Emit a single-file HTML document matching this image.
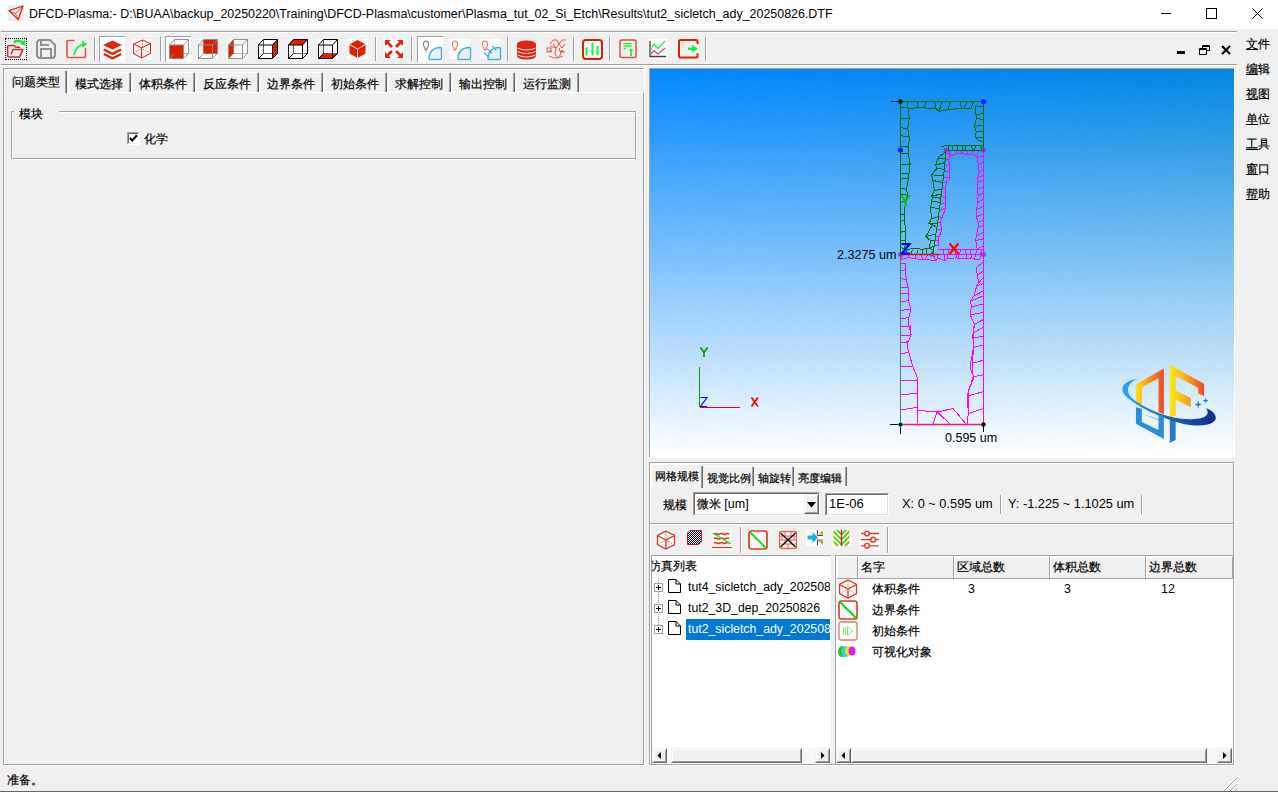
<!DOCTYPE html>
<html><head><meta charset="utf-8">
<style>
*{box-sizing:border-box}
html,body{margin:0;padding:0}
body{width:1278px;height:792px;overflow:hidden;position:relative;background:#f0f0f0;font-family:"Liberation Sans",sans-serif;font-size:12px;color:#000}
.a{position:absolute}
.t{position:absolute;white-space:nowrap;line-height:14px;-webkit-text-stroke:0.2px currentColor}
.l{-webkit-text-stroke:0}
.hl{position:absolute;height:1px}
.vl{position:absolute;width:1px}
.g{background:#a0a0a0}
.w{background:#fff}
svg{position:absolute;overflow:visible}
</style></head><body>

<!-- title bar -->
<div class="a" style="left:0;top:0;width:1278px;height:29px;background:#fff"></div>
<svg style="left:8px;top:5px" width="16" height="16" viewBox="0 0 16 16">
  <rect x="0" y="0" width="16" height="16" fill="#e9eef6"/>
  <path d="M1,5.6 L15,1 L10.2,14.6 Z" fill="none" stroke="#e8200e" stroke-width="1.3" stroke-linejoin="round"/>
  <path d="M1.5,6 L7.4,8.7 L10,14 M7.4,8.7 L14.5,1.8" fill="none" stroke="#e8200e" stroke-width="0.9" opacity="0.85"/>
</svg>
<div class="t l" id="title" style="left:29px;top:7px;font-size:12.45px">DFCD-Plasma:- D:\BUAA\backup_20250220\Training\DFCD-Plasma\customer\Plasma_tut_02_Si_Etch\Results\tut2_sicletch_ady_20250826.DTF</div>
<div class="a" style="left:1161px;top:13px;width:10px;height:1px;background:#000"></div>
<div class="a" style="left:1206px;top:8px;width:11px;height:11px;border:1px solid #000"></div>
<svg style="left:1252px;top:8px" width="11" height="11" viewBox="0 0 11 11"><path d="M0.5 0.5 L10.5 10.5 M10.5 0.5 L0.5 10.5" stroke="#000" stroke-width="1"/></svg>

<!-- toolbar lines -->
<div class="hl g" style="left:1px;top:31px;width:1236px"></div>
<div class="hl w" style="left:1px;top:32px;width:1236px"></div>
<div class="hl g" style="left:1px;top:64px;width:1236px"></div>
<div class="hl w" style="left:1px;top:65px;width:1236px"></div>

<div class="a" style="left:5px;top:38px;width:22px;height:22px;background:#ecf0f8;border:1px dotted #000"></div>
<svg style="left:5px;top:38px" width="22" height="22" viewBox="0 0 22 22"><path d="M14.5,9.2 H10.8 L9.2,7.6 H4 Q2.6,7.6 2.6,9 V17.4 Q2.6,18.9 4,18.9 H14.6 L17.6,12.6 Q17.9,11.5 16.8,11.5 H8.2 L6.2,15.6" fill="none" stroke="#e02412" stroke-width="1.5" stroke-linejoin="round" stroke-linecap="round"/><path d="M8.8,4.6 Q13,0.8 17.5,4.4" fill="none" stroke="#10e830" stroke-width="2.2"/><path d="M15,5.8 L20.2,1.8 L20.2,8 Z" fill="#10e830"/></svg>
<svg style="left:36px;top:39px" width="20" height="20" viewBox="0 0 20 20"><path d="M3,1 H14 L19,6 V17 L17,19 H3 L1,17 V3 Z" fill="none" stroke="#909090" stroke-width="2"/><path d="M5,1 V6 H13" fill="none" stroke="#909090" stroke-width="2"/><path d="M5,19 V10 H15 V19" fill="none" stroke="#909090" stroke-width="2"/></svg>
<svg style="left:66px;top:39px" width="21" height="20" viewBox="0 0 21 20"><path d="M8.5,1.5 H2 Q1,1.5 1,2.5 V17 Q1,18.5 2.5,18.5 H18 Q19.5,18.5 19.5,17 V9" fill="none" stroke="#e05040" stroke-width="1.6"/><path d="M8,16 Q9.5,7 18,5" fill="none" stroke="#10f040" stroke-width="1.7"/><path d="M16,1.5 L21,5 L16.5,9 Z" fill="#10f040"/></svg>
<div class="vl g" style="left:94px;top:37px;height:24px"></div><div class="vl w" style="left:95px;top:37px;height:24px"></div>
<div class="a" style="left:99px;top:36px;width:26px;height:26px;background:#fff;border-left:1px solid #a0a0a0;border-top:1px solid #a0a0a0"></div>
<svg style="left:103px;top:40px" width="20" height="20" viewBox="0 0 20 20"><path d="M9.5,0.5 L19,5 L9.5,9.5 L0,5 Z" fill="#e02412"/><path d="M0.8,9.5 L9.5,13.8 L18.2,9.5 M0.8,14 L9.5,18.3 L18.2,14" fill="none" stroke="#e02412" stroke-width="2.4" stroke-linejoin="round"/></svg>
<div class="a" style="left:132px;top:39px;width:20px;height:20px;background:#fff"></div>
<svg style="left:132px;top:39px" width="20" height="20" viewBox="0 0 20 20"><path d="M10.5,1 L18.5,4.5 V14.5 L9.5,19 L1.5,14.5 V5 Z M1.5,5 L9.5,9 L18.5,4.5 M9.5,9 V19" fill="none" stroke="#e02412" stroke-width="1.1"/><path d="M10.5,2 V8.5 M4,12.5 L9.5,10 M11,10 L16,13" stroke="#e02412" stroke-width="0.8" stroke-dasharray="1.2 1.2"/></svg>
<div class="vl g" style="left:160px;top:37px;height:24px"></div><div class="vl w" style="left:161px;top:37px;height:24px"></div>
<div class="a" style="left:165px;top:36px;width:26px;height:26px;background:#fff;border-left:1px solid #a0a0a0;border-top:1px solid #a0a0a0"></div>
<svg style="left:169px;top:39px" width="20" height="20" viewBox="0 0 20 20"><path d="M5.5,0.5 H19.5 V14.5 H5.5 Z" fill="none" stroke="#b0b0b0" stroke-width="1"/><rect x="0.5" y="6" width="14" height="13.5" fill="#dd1f00"/><path d="M0.5,6 L5.5,0.5 M14.5,6 L19.5,0.5 M14.5,19.5 L19.5,14.5 M0.5,19.5 L5.5,14.5" stroke="#909090" stroke-width="1"/><rect x="0.5" y="6" width="14" height="13.5" fill="none" stroke="#909090" stroke-width="1"/><path d="M5.5,0.5 H19.5 V14.5" fill="none" stroke="#909090" stroke-width="1"/></svg>
<div class="a" style="left:198px;top:39px;width:20px;height:20px;background:#fff"></div>
<svg style="left:198px;top:39px" width="20" height="20" viewBox="0 0 20 20"><path d="M5.5,0.5 H19.5 V14.5 H5.5 Z" fill="none" stroke="#b0b0b0" stroke-width="1"/><path d="M5.5,0.5 H19.5 V14.5 H5.5 Z" fill="#dd1f00"/><path d="M0.5,6 L5.5,0.5 M14.5,6 L19.5,0.5 M14.5,19.5 L19.5,14.5 M0.5,19.5 L5.5,14.5" stroke="#909090" stroke-width="1"/><rect x="0.5" y="6" width="14" height="13.5" fill="none" stroke="#909090" stroke-width="1"/><path d="M5.5,0.5 H19.5 V14.5" fill="none" stroke="#909090" stroke-width="1"/></svg>
<div class="a" style="left:228px;top:39px;width:20px;height:20px;background:#fff"></div>
<svg style="left:228px;top:39px" width="20" height="20" viewBox="0 0 20 20"><path d="M5.5,0.5 H19.5 V14.5 H5.5 Z" fill="none" stroke="#b0b0b0" stroke-width="1"/><path d="M0.5,6 L5.5,0.5 V14.5 L0.5,19.5 Z" fill="#dd1f00"/><path d="M0.5,6 L5.5,0.5 M14.5,6 L19.5,0.5 M14.5,19.5 L19.5,14.5 M0.5,19.5 L5.5,14.5" stroke="#909090" stroke-width="1"/><rect x="0.5" y="6" width="14" height="13.5" fill="none" stroke="#909090" stroke-width="1"/><path d="M5.5,0.5 H19.5 V14.5" fill="none" stroke="#909090" stroke-width="1"/></svg>
<div class="a" style="left:258px;top:39px;width:20px;height:20px;background:#fff"></div>
<svg style="left:258px;top:39px" width="20" height="20" viewBox="0 0 20 20"><path d="M5.5,0.5 H19.5 V14.5 H5.5 Z" fill="none" stroke="#606060" stroke-width="1"/><path d="M14.5,6 L19.5,0.5 V14.5 L14.5,19.5 Z" fill="#dd1f00"/><path d="M0.5,6 L5.5,0.5 M14.5,6 L19.5,0.5 M14.5,19.5 L19.5,14.5 M0.5,19.5 L5.5,14.5" stroke="#000" stroke-width="1"/><rect x="0.5" y="6" width="14" height="13.5" fill="none" stroke="#000" stroke-width="1"/><path d="M5.5,0.5 H19.5 V14.5" fill="none" stroke="#000" stroke-width="1"/></svg>
<div class="a" style="left:288px;top:39px;width:20px;height:20px;background:#fff"></div>
<svg style="left:288px;top:39px" width="20" height="20" viewBox="0 0 20 20"><path d="M5.5,0.5 H19.5 V14.5 H5.5 Z" fill="none" stroke="#606060" stroke-width="1"/><path d="M0.5,6 L5.5,0.5 H19.5 L14.5,6 Z" fill="#dd1f00"/><path d="M0.5,6 L5.5,0.5 M14.5,6 L19.5,0.5 M14.5,19.5 L19.5,14.5 M0.5,19.5 L5.5,14.5" stroke="#000" stroke-width="1"/><rect x="0.5" y="6" width="14" height="13.5" fill="none" stroke="#000" stroke-width="1"/><path d="M5.5,0.5 H19.5 V14.5" fill="none" stroke="#000" stroke-width="1"/></svg>
<div class="a" style="left:318px;top:39px;width:20px;height:20px;background:#fff"></div>
<svg style="left:318px;top:39px" width="20" height="20" viewBox="0 0 20 20"><path d="M5.5,0.5 H19.5 V14.5 H5.5 Z" fill="none" stroke="#606060" stroke-width="1"/><path d="M0.5,19.5 L5.5,14.5 H19.5 L14.5,19.5 Z" fill="#dd1f00"/><path d="M0.5,6 L5.5,0.5 M14.5,6 L19.5,0.5 M14.5,19.5 L19.5,14.5 M0.5,19.5 L5.5,14.5" stroke="#000" stroke-width="1"/><rect x="0.5" y="6" width="14" height="13.5" fill="none" stroke="#000" stroke-width="1"/><path d="M5.5,0.5 H19.5 V14.5" fill="none" stroke="#000" stroke-width="1"/></svg>
<div class="a" style="left:348px;top:39px;width:20px;height:20px;background:#fff"></div>
<svg style="left:348px;top:39px" width="20" height="20" viewBox="0 0 20 20"><path d="M9.5,1 L17.5,5.5 V14.5 L9.5,19 L1.5,14.5 V5.5 Z" fill="#dd1f00"/><path d="M1.5,5.5 L9.5,10 L17.5,5.5 M9.5,10 V19" fill="none" stroke="#fff" stroke-width="0.9"/></svg>
<div class="vl g" style="left:375px;top:37px;height:24px"></div><div class="vl w" style="left:376px;top:37px;height:24px"></div>
<div class="a" style="left:384px;top:39px;width:20px;height:20px;background:#fff"></div>
<svg style="left:384px;top:39px" width="20" height="20" viewBox="0 0 20 20"><path d="M1,1 H7 L5,3 L9,7 L7,9 L3,5 L1,7 Z M19,1 V7 L17,5 L13,9 L11,7 L15,3 L13,1 Z M1,19 V13 L3,15 L7,11 L9,13 L5,17 L7,19 Z M19,19 H13 L15,17 L11,13 L13,11 L17,15 L19,13 Z" fill="#e02412"/></svg>
<div class="vl g" style="left:411px;top:37px;height:24px"></div><div class="vl w" style="left:412px;top:37px;height:24px"></div>
<div class="a" style="left:417px;top:36px;width:26px;height:26px;background:#fff;border-left:1px solid #a0a0a0;border-top:1px solid #a0a0a0"></div>
<svg style="left:422px;top:40px" width="20" height="20" viewBox="0 0 20 20"><path d="M3,8 C0.5,6 1,1 4,1 C7,1 7.5,6 5,8 V9.5 H3 Z" fill="none" stroke="#808080" stroke-width="1.1"/><path d="M3,10 H5" stroke="#808080" stroke-width="1.2"/><path d="M7,19 Q7,8 18.5,7.5 Q19.5,7.5 19.5,8.5 V18 Q19.5,19.5 18,19.5 H8 Q7,19.5 7,19 Z" fill="#e8f4fc" stroke="#48ace0" stroke-width="1.4"/></svg>
<div class="a" style="left:450px;top:39px;width:20px;height:20px;background:#fff"></div>
<svg style="left:451px;top:40px" width="20" height="20" viewBox="0 0 20 20"><path d="M3,8 C0.5,6 1,1 4,1 C7,1 7.5,6 5,8 V9.5 H3 Z" fill="none" stroke="#f07060" stroke-width="1.1"/><path d="M3,10 H5" stroke="#f07060" stroke-width="1.2"/><path d="M7,19 Q7,8 18.5,7.5 Q19.5,7.5 19.5,8.5 V18 Q19.5,19.5 18,19.5 H8 Q7,19.5 7,19 Z" fill="#e8f4fc" stroke="#48ace0" stroke-width="1.4"/></svg>
<div class="a" style="left:480px;top:39px;width:20px;height:20px;background:#fff"></div>
<svg style="left:481px;top:40px" width="20" height="20" viewBox="0 0 20 20"><path d="M3,8 C0.5,6 1,1 4,1 C7,1 7.5,6 5,8 V9.5 H3 Z" fill="none" stroke="#f07060" stroke-width="1.1"/><path d="M3,10 H5" stroke="#f07060" stroke-width="1.2"/><path d="M7,19 Q7,8 18.5,7.5 Q19.5,7.5 19.5,8.5 V18 Q19.5,19.5 18,19.5 H8 Q7,19.5 7,19 Z" fill="#e8f4fc" stroke="#48ace0" stroke-width="1.4"/><path d="M6,8.5 L11,13.5 M11,6 L15.5,10.5 M3,12.5 L7.5,17" stroke="#48ace0" stroke-width="1.1"/></svg>
<div class="vl g" style="left:507px;top:37px;height:24px"></div><div class="vl w" style="left:508px;top:37px;height:24px"></div>
<svg style="left:516px;top:40px" width="21" height="20" viewBox="0 0 21 20"><ellipse cx="10.5" cy="4" rx="9.5" ry="3.5" fill="#e02412"/><path d="M1,4 V15.5 Q1,19.5 10.5,19.5 Q20,19.5 20,15.5 V4 Z" fill="#e02412"/><path d="M1.5,8 Q10.5,12 19.5,8 M1.5,11.5 Q10.5,15.5 19.5,11.5 M1.5,15 Q10.5,19 19.5,15" fill="none" stroke="#fff" stroke-width="0.9"/></svg>
<svg style="left:546px;top:39px" width="21" height="21" viewBox="0 0 21 21"><g fill="none" stroke="#e85a48" stroke-width="1"><path d="M4,5 L7,1 H11 L13,5 L16,1 H20 M7,5 L10,9 L13,5 L16,9 L19,5 M4,7 L10,9 M10,9 L9,15 L12,19 L15,15 L13,9 M3,17 Q10,21 17,17 M2,12 H6 M15,13 H19"/><rect x="1" y="9" width="4" height="4"/><path d="M16,11 L18,13 L14,13 Z"/></g></svg>
<div class="vl g" style="left:573px;top:37px;height:24px"></div><div class="vl w" style="left:574px;top:37px;height:24px"></div>
<svg style="left:582px;top:39px" width="21" height="21" viewBox="0 0 21 21"><rect x="1" y="1" width="19" height="19" rx="3" fill="#fff" stroke="#dd1f00" stroke-width="2"/><path d="M4.5,8.5 V16.5 M10.5,3.5 V16.5 M15.5,7 V16.5" stroke="#20f040" stroke-width="2"/></svg>
<div class="vl g" style="left:609px;top:37px;height:24px"></div><div class="vl w" style="left:610px;top:37px;height:24px"></div>
<svg style="left:619px;top:39px" width="18" height="20" viewBox="0 0 18 20"><rect x="1" y="1" width="16" height="17.5" rx="2" fill="none" stroke="#e05040" stroke-width="1.5"/><path d="M4.5,4.5 H12.5 M4.5,7 H12.5 M4.5,9.5 H7" stroke="#20f040" stroke-width="1.4"/><path d="M12,17 V11" stroke="#20f040" stroke-width="1.8"/><path d="M9.5,12 L12,9.5 L14.5,12 Z" fill="#20f040"/></svg>
<div class="a" style="left:648px;top:39px;width:20px;height:20px;background:#fff"></div>
<svg style="left:648px;top:39px" width="20" height="20" viewBox="0 0 20 20"><path d="M2,2 V17.5 H18" fill="none" stroke="#404040" stroke-width="1.3"/><path d="M2.5,11 L6,5 L10,9.5 L17,2" fill="none" stroke="#20f040" stroke-width="1.2"/><path d="M2.5,15 L6,11.5 L10,15 L17,9" fill="none" stroke="#e04060" stroke-width="1.2"/></svg>
<svg style="left:678px;top:39px" width="21" height="20" viewBox="0 0 21 20"><path d="M19.5,5 V2.5 Q19.5,1 18,1 H2.5 Q1,1 1,2.5 V17 Q1,18.5 2.5,18.5 H18 Q19.5,18.5 19.5,17 V14.5" fill="none" stroke="#dd1f00" stroke-width="2"/><path d="M10,9.8 H16" stroke="#10f040" stroke-width="2.4"/><path d="M14,6 L20,9.8 L14,13.6 Z" fill="#10f040"/></svg>
<div class="vl g" style="left:705px;top:37px;height:24px"></div><div class="vl w" style="left:706px;top:37px;height:24px"></div>

<!-- MDI buttons -->
<div class="a" style="left:1177px;top:51px;width:8px;height:3px;background:#000"></div>
<svg style="left:1199px;top:45px" width="11" height="10" viewBox="0 0 11 10"><path d="M3.5 3 V0.5 H10.5 V5.5 H7.5 M0.5 3.5 H7.5 V9.5 H0.5 Z M0.5 4.5 H7.5" fill="none" stroke="#000" stroke-width="1"/><path d="M3.5 1.5 H10.5" stroke="#000"/></svg>
<svg style="left:1221px;top:45px" width="10" height="10" viewBox="0 0 10 10"><path d="M1 1 L9 9 M9 1 L1 9" stroke="#000" stroke-width="2.2"/></svg>

<!-- right menu -->
<div class="t" style="left:1246px;top:37px">文件</div>
<div class="t" style="left:1246px;top:62px">编辑</div>
<div class="t" style="left:1246px;top:87px">视图</div>
<div class="t" style="left:1246px;top:112px">单位</div>
<div class="t" style="left:1246px;top:137px">工具</div>
<div class="t" style="left:1246px;top:162px">窗口</div>
<div class="t" style="left:1246px;top:187px">帮助</div>

<div class="hl" style="left:1246px;top:49px;width:12px;background:#000"></div>
<div class="hl" style="left:1246px;top:74px;width:12px;background:#000"></div>
<div class="hl" style="left:1246px;top:99px;width:12px;background:#000"></div>
<div class="hl" style="left:1246px;top:124px;width:12px;background:#000"></div>
<div class="hl" style="left:1246px;top:149px;width:12px;background:#000"></div>
<div class="hl" style="left:1246px;top:174px;width:12px;background:#000"></div>
<div class="hl" style="left:1246px;top:199px;width:12px;background:#000"></div>
<div class="a" style="left:3px;top:68px;width:641px;height:697px;border:1px solid #a0a0a0;border-right:none"></div><div class="vl g" style="left:643px;top:93px;height:672px"></div>
<div class="hl w" style="left:4px;top:69px;width:640px"></div>
<div class="vl w" style="left:4px;top:69px;height:695px"></div>
<div class="vl w" style="left:644px;top:68px;height:698px"></div>
<div class="hl w" style="left:3px;top:765px;width:642px"></div>
<div class="hl w" style="left:4px;top:92px;width:639px"></div>
<div class="vl w" style="left:68px;top:73px;height:19px"></div>
<div class="hl w" style="left:69px;top:72px;width:60px"></div>
<div class="vl" style="left:130px;top:73px;height:19px;background:#696969"></div>
<div class="vl g" style="left:129px;top:73px;height:19px"></div>
<div class="t" style="left:75px;top:77px">模式选择</div>
<div class="vl w" style="left:132px;top:73px;height:19px"></div>
<div class="hl w" style="left:133px;top:72px;width:60px"></div>
<div class="vl" style="left:194px;top:73px;height:19px;background:#696969"></div>
<div class="vl g" style="left:193px;top:73px;height:19px"></div>
<div class="t" style="left:139px;top:77px">体积条件</div>
<div class="vl w" style="left:196px;top:73px;height:19px"></div>
<div class="hl w" style="left:197px;top:72px;width:60px"></div>
<div class="vl" style="left:258px;top:73px;height:19px;background:#696969"></div>
<div class="vl g" style="left:257px;top:73px;height:19px"></div>
<div class="t" style="left:203px;top:77px">反应条件</div>
<div class="vl w" style="left:260px;top:73px;height:19px"></div>
<div class="hl w" style="left:261px;top:72px;width:60px"></div>
<div class="vl" style="left:322px;top:73px;height:19px;background:#696969"></div>
<div class="vl g" style="left:321px;top:73px;height:19px"></div>
<div class="t" style="left:267px;top:77px">边界条件</div>
<div class="vl w" style="left:324px;top:73px;height:19px"></div>
<div class="hl w" style="left:325px;top:72px;width:60px"></div>
<div class="vl" style="left:386px;top:73px;height:19px;background:#696969"></div>
<div class="vl g" style="left:385px;top:73px;height:19px"></div>
<div class="t" style="left:331px;top:77px">初始条件</div>
<div class="vl w" style="left:388px;top:73px;height:19px"></div>
<div class="hl w" style="left:389px;top:72px;width:60px"></div>
<div class="vl" style="left:450px;top:73px;height:19px;background:#696969"></div>
<div class="vl g" style="left:449px;top:73px;height:19px"></div>
<div class="t" style="left:395px;top:77px">求解控制</div>
<div class="vl w" style="left:452px;top:73px;height:19px"></div>
<div class="hl w" style="left:453px;top:72px;width:60px"></div>
<div class="vl" style="left:514px;top:73px;height:19px;background:#696969"></div>
<div class="vl g" style="left:513px;top:73px;height:19px"></div>
<div class="t" style="left:459px;top:77px">输出控制</div>
<div class="vl w" style="left:516px;top:73px;height:19px"></div>
<div class="hl w" style="left:517px;top:72px;width:60px"></div>
<div class="vl" style="left:578px;top:73px;height:19px;background:#696969"></div>
<div class="vl g" style="left:577px;top:73px;height:19px"></div>
<div class="t" style="left:523px;top:77px">运行监测</div>
<div class="a" style="left:4px;top:69px;width:63px;height:25px;background:#f0f0f0"></div>
<div class="vl w" style="left:4px;top:71px;height:22px"></div>
<div class="hl w" style="left:6px;top:69px;width:59px"></div>
<div class="vl" style="left:66px;top:71px;height:22px;background:#696969"></div>
<div class="vl g" style="left:65px;top:71px;height:22px"></div>
<div class="t" style="left:12px;top:75px">问题类型</div>
<div class="a" style="left:11px;top:111px;width:625px;height:48px;border:1px solid #a0a0a0"></div>
<div class="a" style="left:12px;top:112px;width:625px;height:48px;border:1px solid #fff;border-right:none;border-bottom:none"></div>
<div class="vl w" style="left:636px;top:111px;height:49px"></div>
<div class="hl w" style="left:11px;top:159px;width:626px"></div>
<div class="a" style="left:14px;top:106px;width:45px;height:10px;background:#f0f0f0"></div>
<div class="t" style="left:19px;top:107px">模块</div>
<svg style="left:127px;top:132px" width="13" height="13" viewBox="0 0 13 13"><rect x="0" y="0" width="13" height="13" fill="#fff"/><path d="M0.5 12 V0.5 H12" stroke="#a0a0a0" fill="none"/><path d="M1.5 11 V1.5 H11" stroke="#696969" fill="none"/><path d="M3 6 L5.2 8.5 L10 3.3" stroke="#000" stroke-width="2" fill="none"/></svg>
<div class="t" style="left:144px;top:132px">化学</div>

<div class="a" style="left:649px;top:68px;width:586px;height:390px;background:#fff"></div>
<div class="vl" style="left:649px;top:68px;height:389px;background:#a0a0a0"></div>
<div class="hl" style="left:649px;top:68px;width:585px;background:#a89c90"></div>
<div class="a" style="left:650px;top:69px;width:584px;height:388px;background:linear-gradient(to bottom,#0288ff 0%,#80c3ff 50%,#ffffff 100%)"></div>
<div class="a" style="left:650px;top:69px;width:584px;height:388px;background:linear-gradient(to bottom,#0286e0 0%,#80c2f0 50%,#ffffff 100%);-webkit-mask-image:linear-gradient(to right,rgba(0,0,0,0),#000);mask-image:linear-gradient(to right,rgba(0,0,0,0),#000)"></div>
<svg style="left:0;top:0" width="1278" height="792" viewBox="0 0 1278 792">
<path d="M946,150 L944,172 L942,188 L940,205 L938,220 L935,240 L933,254 M945.7,153.0 L951.0,153.7 M945.2,158.8 L948.4,159.8 M944.6,165.7 L950.0,164.3 M944.0,171.6 L949.7,170.8 M943.3,177.6 L949.7,178.0 M942.7,182.7 L946.8,181.3 M941.8,189.4 L945.4,188.5 M941.0,196.8 L945.5,197.3 M940.1,204.2 L945.8,203.7 M939.4,209.2 L945.4,208.9 M938.4,216.6 L942.0,217.8 M937.6,222.9 L940.2,222.4 M936.7,228.9 L942.1,229.9 M935.6,235.7 L938.8,237.0 M934.9,240.5 L938.3,240.4 M934.2,245.5 L939.0,245.2 M950.9533000694422,153.70511445464544 L948.3550297819514,159.8009910709351 L949.9775403470254,164.27600711173162 L949.6922453334016,170.80874708794198 L949.6878953410082,177.95169402201626 L946.7962437339557,181.26309464377738 L945.368654938536,188.47818939380664 L945.4667268387745,197.31103392734553 L945.7797632789574,203.72216268295006 L945.4342361018968,208.94858747744436 L941.9800937914956,217.78790470051996 L940.2252727247777,222.39574435566598 L942.0689009499658,229.94485202436354 L938.8151911919891,237.04394956895183 L938.3356853567597,240.35476154513998 L939.043583239896,245.21545695137436 M950.0,150.5 L949.3,156.4 M956.9,150.5 L956.8,153.8 M961.0,150.5 L962.5,153.6 M967.2,150.5 L967.4,154.6 M973.5,150.5 L971.6,154.0 M978.9,150.5 L977.0,156.4 M949.261486581453,156.43691444357228 L956.756018870739,153.76137725934794 L962.5318830619672,153.64520939718105 L967.4487874729094,154.58160622993486 L971.6174562559127,153.97558405561867 L977.0044034711319,156.40383952060674 M983.5,150 L983.5,424 M983.5,156.0 L976.9,157.4 M983.5,162.5 L978.3,164.8 M983.5,169.0 L979.1,172.4 M983.5,175.7 L977.9,177.3 M983.5,180.5 L977.9,181.6 M983.5,187.3 L977.5,188.8 M983.5,192.7 L978.0,195.8 M983.5,199.2 L977.7,202.4 M983.5,206.2 L976.7,209.9 M983.5,213.8 L976.6,216.9 M983.5,219.6 L978.3,222.5 M983.5,225.2 L978.1,227.9 M983.5,232.2 L976.2,236.1 M983.5,238.8 L975.7,240.4 M983.5,245.9 L977.1,248.8 M976.9126621660712,157.4226235776435 L978.3119141674409,164.80449140028773 L979.1003055646056,172.4453587787214 L977.9403415248878,177.28540219890542 L977.9332788086208,181.56294787874916 L977.4536518474564,188.83895974019603 L978.0490150719955,195.83826034751945 L977.6635403142791,202.42695780502396 L976.6783697087811,209.92800424885468 L976.5608943736719,216.9337986019351 L978.2871789200223,222.4760417548427 L978.0718876326158,227.86232932838956 L976.2272241301463,236.05702328432727 L975.6861230005815,240.38369359425835 L977.0957327644428,248.839903356278 M983.5,262.0 L976.1,267.6 M983.5,271.0 L977.3,275.2 M983.5,277.3 L978.8,282.9 M983.5,283.6 L976.7,285.9 M983.5,290.8 L974.0,295.9 M983.5,295.8 L970.5,301.1 M983.5,304.1 L971.4,306.8 M983.5,312.3 L970.2,314.9 M983.5,319.4 L974.5,324.3 M983.5,327.2 L973.3,333.0 M983.5,336.1 L972.0,338.4 M976.0881753956153,267.5999349471993 L977.3455749683558,275.15273219651283 L978.778917313205,282.89052252526864 L976.704505962955,285.94538355819634 L973.9879898101294,295.8984953015455 L970.5401529008104,301.08144547997506 L971.3753960448736,306.7958815104354 L970.2433777674967,314.8755019238952 L974.527599345261,324.2771713305848 L973.3109692793521,332.96125585700133 L972.0210419537127,338.4088086736134 M983.5,345.0 L974.0,347.2 M983.5,360.2 L972.0,363.3 M983.5,374.7 L973.1,376.9 M983.5,391.6 L967.1,396.2 M983.5,408.5 L968.4,413.4 M974.0167771374453,347.16067870948194 L972.0349085684113,363.257648490648 L973.1310733706384,376.9170649872754 L967.1372267402203,396.1725636518119 L968.4230658629224,413.3907033309963 M973,326 L973.5,336 L973,350 L970,367 L974,378 L968,391 L969,408 L967,424 M900.5,254.5 L983.5,254.5 M938,249.5 L983,249.5 M903.0,254.5 L901.2,259.4 M908.5,254.5 L909.1,257.6 M915.4,254.5 L915.5,258.9 M921.8,254.5 L922.2,259.2 M927.9,254.5 L925.3,259.4 M933.1,254.5 L935.9,260.7 M937.9,254.5 L937.8,257.9 M943.2,249.5 L945.1,260.7 M948.7,249.5 L947.6,258.2 M954.5,249.5 L957.1,258.0 M960.9,249.5 L958.0,258.2 M965.5,249.5 L966.7,258.6 M970.6,249.5 L971.3,257.9 M976.8,249.5 L974.5,259.3 M981.6,249.5 L979.7,259.4 M901.2058033530899,259.3756628736852 L909.1408888047708,257.59714431229327 L915.5138435263244,258.9020437702834 L922.1981427285555,259.21864156295567 L925.2893042504797,259.38550404165886 L935.8764156116537,260.73196556728004 L937.7818355118824,257.94438656187714 L945.1382016199318,260.6519441397493 L947.5767853114431,258.1700810079901 L957.0788061473039,257.95311507550906 L958.0017642425582,258.179373108181 L966.6690307867083,258.6272878723786 L971.3314658640019,257.8670992758041 L974.5422491806833,259.2866416885133 L979.7435831151229,259.35623159315855 M900.5,264.0 L905.1,263.4 M900.5,271.1 L905.5,269.4 M900.5,278.7 L906.2,279.4 M900.5,287.2 L908.1,287.7 M900.5,293.0 L909.1,294.2 M900.5,301.7 L908.3,300.8 M900.5,310.5 L910.9,309.1 M900.5,319.1 L909.0,317.3 M900.5,327.1 L908.8,325.9 M900.5,335.5 L911.3,335.1 M905.1145818036317,263.37868098292523 L905.5145222088893,269.42190284637553 L906.1985604208719,279.36711914927423 L908.0896896663193,287.7086233484949 L909.1156480894168,294.2310907624006 L908.2876686942019,300.7978475118293 L910.9296915725897,309.08482134656447 L908.9610902883884,317.2914360119543 L908.8306332537883,325.8708837780858 L911.327837340634,335.07665704024305 M910,325 L910.5,336 L907,345 L909,353 L912.5,366 L918,379 L917.5,395 L917.5,410 L917,424 M900.5,343 L907.8,341.8 M900.5,354 L909.3,351.9 M900.5,367 L912.9,366.9 M900.5,381 L917.9,380.4 M900.5,395 L917.5,393.0 M900.5,410 L917.5,407.3 M917,410 L929,411.6 L938,412 L953,408.5 L966,424 M937,411.6 L933,424 M937,411.6 L950,424" fill="none" stroke="#ff00ff" stroke-width="1" shape-rendering="crispEdges"/>
<path d="M900.5,254 L900.5,101.5 L983.5,101.5 L983.5,150.5 L946,150.5 M946,145.5 L983,145.5 M941,147 L946,145.5 M908.0,101.5 L907.7,109.4 M917.7,101.5 L917.5,107.3 M926.0,101.5 L924.2,107.8 M934.6,101.5 L936.3,109.1 M941.8,101.5 L939.3,111.3 M950.6,101.5 L947.8,109.7 M960.4,101.5 L961.3,108.4 M967.0,101.5 L964.1,108.3 M973.3,101.5 L971.4,108.0 M907.714277321059,109.3637156303336 L917.4907427566936,107.30730116336417 L924.1543437146238,107.81835752626046 L936.3237737674815,109.0857240452916 L939.323540807811,111.298004833477 L947.804553531244,109.67502819887255 L961.3358378387303,108.35569865338294 L964.1322834397854,108.27756733741548 L971.4217330155508,107.97225801083685 M900.5,108.0 L908.3,107.9 M900.5,118.8 L909.2,118.9 M900.5,127.8 L907.7,128.3 M900.5,135.6 L909.3,137.1 M900.5,146.5 L908.8,147.1 M900.5,154.0 L908.2,153.4 M900.5,164.5 L910.1,164.2 M900.5,172.9 L908.9,174.2 M900.5,179.2 L908.5,178.3 M900.5,188.0 L906.4,189.4 M900.5,194.7 L907.8,195.1 M900.5,202.4 L905.3,201.2 M900.5,214.0 L904.6,214.7 M900.5,221.6 L904.3,220.4 M900.5,232.2 L905.8,231.2 M900.5,240.9 L905.7,240.0 M900.5,247.9 L904.8,248.3 M908.2810469088813,107.89180338366985 L909.2392201963643,118.9064788382923 L907.7217051280604,128.33523011158783 L909.2728073688414,137.14292977549098 L908.7652412764128,147.11055400585704 L908.2106704986797,153.3944408519885 L910.1231033645018,164.16647501141756 L908.8916868863955,174.22657581783355 L908.4562706193644,178.28454357216305 L906.4397500658521,189.43439944197087 L907.7999977457166,195.07609441185204 L905.3408790010129,201.20595043919724 L904.6020251124686,214.72465096472834 L904.3390854567318,220.38416326464008 L905.7996829134635,231.21797488632254 L905.7010650299222,239.97308808610404 L904.7761242366342,248.3394024634362 M983.5,107.0 L975.9,105.9 M983.5,113.4 L976.0,114.6 M983.5,119.6 L976.5,118.4 M983.5,125.6 L974.5,126.2 M983.5,132.1 L976.1,131.0 M983.5,137.9 L975.8,137.2 M983.5,141.6 L977.6,140.0 M975.9020331184238,105.85146269203636 L975.990739597236,114.62643318098436 L976.5460827803358,118.41022339264075 L974.5336168693411,126.19785583836851 L976.1162673771104,130.9513917788473 L975.7997439798123,137.23230907604662 L977.5805883031255,139.9971517258687 M948.0,145.5 L948.3,150.5 M952.2,145.5 L952.1,150.5 M957.7,145.5 L957.6,150.5 M962.3,145.5 L963.4,150.5 M966.2,145.5 L965.1,150.5 M971.5,145.5 L972.4,150.5 M975.5,145.5 L974.6,150.5 M980.5,145.5 L981.8,150.5 M946,150 L944,172 L942,188 L940,205 L938,220 L935,240 L933,254 M945.8,152.0 L942.3,154.3 M945.2,158.4 L938.0,158.0 M944.8,162.7 L935.6,165.0 M944.2,169.4 L937.2,168.2 M943.5,175.8 L931.5,174.8 M942.7,182.6 L932.8,180.4 M941.9,188.8 L934.4,190.6 M941.3,194.0 L931.4,196.1 M940.8,198.3 L932.5,197.1 M940.3,202.7 L931.7,201.1 M939.5,208.9 L930.7,207.1 M938.5,216.4 L931.3,218.8 M937.5,223.0 L929.1,223.5 M936.9,227.4 L932.6,225.0 M935.9,234.1 L925.9,236.4 M934.9,240.6 L930.3,240.5 M934.2,245.9 L929.7,248.4 M942.2517961111918,154.2506792615432 L938.0210157438287,157.9800092929572 L935.5696190617816,165.0254380285961 L937.1560554134381,168.23342352092973 L931.466052496857,174.76297196525962 L932.8493034272369,180.4329478327506 L934.3779177290263,190.56478542278924 L931.3978525355375,196.0983767517978 L932.4932815160703,197.11721475456406 L931.6694652891234,201.07015406464112 L930.7458916537951,207.10658771336287 L931.254478613149,218.75854704480906 L929.0850661838496,223.46667900751393 L932.5610026160088,224.96023858382122 L925.8879188378662,236.40811473410324 L930.3177240905133,240.49570255736043 L929.6861039139993,248.42936824061195 M906.0,254 L906.9,249.8 M911.3,254 L912.4,249.8 M916.5,254 L918.1,249.7 M921.9,254 L923.4,249.1 M926.4,254 L926.7,249.2 M931.5,254 L933.5,249.8 M906.948021979465,249.47417626883313 L912.4322932524784,248.7036681932945 L918.0754351937603,248.83430628395436 L923.4023121340755,249.24992109331885 L926.7349708235298,248.16040405766142 L933.4760547902318,249.4564141531311" fill="none" stroke="#006e00" stroke-width="1" shape-rendering="crispEdges"/>
<path d="M900.5,254 L900.5,424" stroke="#4f7d55" stroke-width="1" shape-rendering="crispEdges"/>
<path d="M900,424.5 L983,424.5" stroke="#ff1070" stroke-width="1.3"/>
<path d="M900,254.5 L940,254.5" stroke="#ff0000" stroke-width="1.3"/>
<path d="M891,101.5 L900,101.5 M890,424.5 L900,424.5 M900.5,424 L900.5,434 M983.5,424 L983.5,432" stroke="#000" stroke-width="1"/>
<circle cx="900.5" cy="101.5" r="2.2" fill="#000"/>
<circle cx="983.5" cy="101.5" r="2.5" fill="#0010ff"/>
<circle cx="900.5" cy="150" r="2.5" fill="#0010ff"/>
<circle cx="946" cy="150" r="2.5" fill="#9030c0" opacity="0.8"/>
<circle cx="983.5" cy="150" r="2.5" fill="#9030c0" opacity="0.8"/>
<circle cx="900.5" cy="254.5" r="2.5" fill="#9030c0" opacity="0.8"/>
<circle cx="932" cy="254.5" r="2.2" fill="#9030c0" opacity="0.8"/>
<circle cx="983.5" cy="254.5" r="2.5" fill="#9030c0" opacity="0.8"/>
<circle cx="900.5" cy="424.5" r="2.5" fill="#20d0d0"/><circle cx="900.5" cy="424.5" r="1.8" fill="#000"/>
<circle cx="983.5" cy="424.5" r="2.2" fill="#000"/>
<path d="M901,195 L905.5,201 L910,195 M905.5,201 L905.5,207" fill="none" stroke="#10c010" stroke-width="2"/>
<path d="M901.5,244 H909.5 L902,253.5 H910" fill="none" stroke="#0000ff" stroke-width="2.2"/>
<path d="M949.5,243.5 L958.5,254 M958.5,243.5 L949.5,254" fill="none" stroke="#ff0000" stroke-width="2.2"/>
<path d="M699.5,367 L699.5,407" stroke="#00a000" stroke-width="1"/>
<path d="M700,407.5 L740,407.5" stroke="#ff0000" stroke-width="1"/>
<path d="M700.5,397.5 H707 L700.5,406.5 H707" fill="none" stroke="#0000ff" stroke-width="1.1"/>
<path d="M700.5,347.5 L704,352.5 L707.5,347.5 M704,352.5 L704,357" fill="none" stroke="#00a000" stroke-width="1.8"/>
<path d="M751.5,397.5 L758,406.5 M758,397.5 L751.5,406.5" fill="none" stroke="#ff0000" stroke-width="1.8"/>
</svg>
<div class="t l" style="left:837px;top:248px;font-size:12.6px">2.3275 um</div>
<div class="t l" style="left:945px;top:431px;font-size:12.5px">0.595 um</div>
<svg style="left:1115px;top:360px" width="105" height="85" viewBox="0 0 978 792">
<defs>
<linearGradient id="lgD" x1="195" y1="0" x2="455" y2="0" gradientUnits="userSpaceOnUse"><stop offset="0" stop-color="#ffe014"/><stop offset="1" stop-color="#ee4628"/></linearGradient>
<linearGradient id="lgF" x1="510" y1="0" x2="830" y2="0" gradientUnits="userSpaceOnUse"><stop offset="0" stop-color="#ffe814"/><stop offset="0.5" stop-color="#f8a820"/><stop offset="1" stop-color="#ee4628"/></linearGradient>
<linearGradient id="lgB" x1="50" y1="0" x2="940" y2="0" gradientUnits="userSpaceOnUse"><stop offset="0" stop-color="#30a8e8"/><stop offset="0.55" stop-color="#1a60b8"/><stop offset="1" stop-color="#0c2c88"/></linearGradient>
</defs>
<path d="M195,440 L250,455 L250,500 L405,560 L405,520 L455,535 L455,735 L195,595 Z M250,500 L250,578 L405,652 L405,552 Z" fill="#2a8ed8" fill-rule="evenodd"/>
<path d="M510,540 L565,550 L565,745 L510,770 Z" fill="#2a78c8"/>
<path d="M195,225 L455,80 L455,505 L405,485 L405,170 L250,255 L250,420 L195,398 Z" fill="url(#lgD)"/>
<path d="M510,45 L830,222 L830,335 L775,312 L775,262 L565,150 L565,285 L705,355 L705,440 L565,368 L565,525 L510,532 Z" fill="url(#lgF)"/>
<path d="M205,176 C80,192 25,268 110,345 C230,452 470,560 650,598 C830,632 965,592 935,520 C920,482 885,462 848,450 C885,500 860,548 720,552 C520,560 290,462 165,362 C92,300 110,215 205,176 Z" fill="url(#lgB)"/>
<path d="M775,378 L783,405 L808,415 L783,425 L775,452 L767,425 L742,415 L767,405 Z M845,350 L851,370 L872,378 L851,386 L845,406 L839,386 L818,378 L839,370 Z" fill="#2a70d0"/>
</svg>

<div class="a" style="left:649px;top:462px;width:585px;height:303px;border:1px solid #a0a0a0"></div><div class="hl w" style="left:650px;top:463px;width:583px"></div><div class="vl w" style="left:650px;top:463px;height:301px"></div><div class="vl w" style="left:1234px;top:462px;height:304px"></div><div class="hl w" style="left:649px;top:765px;width:586px"></div>
<div class="hl w" style="left:704px;top:466px;width:48px"></div>
<div class="vl" style="left:753px;top:467px;height:19px;background:#696969"></div>
<div class="vl g" style="left:752px;top:467px;height:19px"></div>
<div class="t" style="left:707px;top:471px;font-size:11px">视觉比例</div>
<div class="hl w" style="left:755px;top:466px;width:37px"></div>
<div class="vl" style="left:793px;top:467px;height:19px;background:#696969"></div>
<div class="vl g" style="left:792px;top:467px;height:19px"></div>
<div class="t" style="left:758px;top:471px;font-size:11px">轴旋转</div>
<div class="hl w" style="left:795px;top:466px;width:50px"></div>
<div class="vl" style="left:846px;top:467px;height:19px;background:#696969"></div>
<div class="vl g" style="left:845px;top:467px;height:19px"></div>
<div class="t" style="left:798px;top:471px;font-size:11px">亮度编辑</div>
<div class="vl w" style="left:651px;top:465px;height:22px"></div>
<div class="hl w" style="left:652px;top:464px;width:50px"></div>
<div class="vl" style="left:702px;top:466px;height:22px;background:#696969"></div>
<div class="vl g" style="left:701px;top:466px;height:22px"></div>
<div class="t" style="left:655px;top:469px;font-size:11px">网格规模</div>
<div class="t" style="left:663px;top:498px">规模</div>
<div class="a" style="left:693px;top:492px;width:127px;height:24px;background:#fff;border-style:solid;border-width:1px;border-color:#a0a0a0 #fff #fff #a0a0a0"></div><div class="a" style="left:694px;top:493px;width:125px;height:22px;border-style:solid;border-width:1px;border-color:#696969 #e3e3e3 #e3e3e3 #696969"></div>
<div class="t" style="left:697px;top:497px">微米 <span class="l" style="font-size:12.5px">[um]</span></div>
<div class="a" style="left:804px;top:494px;width:15px;height:20px;background:#f0f0f0;border-style:solid;border-width:1px;border-color:#f0f0f0 #696969 #696969 #f0f0f0"></div><div class="a" style="left:805px;top:495px;width:13px;height:18px;border-style:solid;border-width:1px;border-color:#fff #a0a0a0 #a0a0a0 #fff"></div>
<svg style="left:807px;top:502px" width="10" height="6" viewBox="0 0 10 6"><path d="M0,0 H9 L4.5,5.5 Z" fill="#000"/></svg>
<div class="a" style="left:825px;top:493px;width:64px;height:23px;background:#fff;border-style:solid;border-width:1px;border-color:#a0a0a0 #fff #fff #a0a0a0"></div><div class="a" style="left:826px;top:494px;width:62px;height:21px;border-style:solid;border-width:1px;border-color:#696969 #e3e3e3 #e3e3e3 #696969"></div>
<div class="t l" style="left:829px;top:497px;font-size:13px">1E-06</div>
<div class="t l" style="left:902px;top:497px;font-size:12.8px">X: 0 ~ 0.595 um</div>
<div class="vl g" style="left:1000px;top:495px;height:19px"></div><div class="vl w" style="left:1001px;top:495px;height:19px"></div>
<div class="t l" style="left:1008px;top:497px;font-size:12.8px">Y: -1.225 ~ 1.1025 um</div>
<div class="vl g" style="left:1141px;top:495px;height:19px"></div><div class="vl w" style="left:1142px;top:495px;height:19px"></div>
<div class="hl g" style="left:650px;top:523px;width:583px"></div><div class="hl w" style="left:650px;top:524px;width:583px"></div>
<div class="vl g" style="left:740px;top:527px;height:26px"></div><div class="vl w" style="left:741px;top:527px;height:26px"></div>
<div class="vl g" style="left:887px;top:527px;height:26px"></div><div class="vl w" style="left:888px;top:527px;height:26px"></div>
<div class="a" style="left:656px;top:530px;width:20px;height:20px;background:#fff"></div>
<svg style="left:656px;top:530px" width="20" height="20" viewBox="0 0 20 20"><path d="M10,1 L18.5,5.5 V14.5 L10,19 L1.5,14.5 V5.5 Z M1.5,5.5 L10,10 L18.5,5.5 M10,10 V19" fill="none" stroke="#e8341c" stroke-width="1.4"/><path d="M10,2 V9.5 M4,13.5 L10,10 L16,13.5" stroke="#e8341c" stroke-width="0.8" stroke-dasharray="1.5 1" fill="none"/></svg>
<svg style="left:687px;top:530px" width="15" height="15" viewBox="0 0 15 15"><defs><pattern id="chk" width="2" height="2" patternUnits="userSpaceOnUse"><rect width="2" height="2" fill="#fff"/><rect width="1" height="1" fill="#000"/><rect x="1" y="1" width="1" height="1" fill="#000"/></pattern></defs><path d="M3,0.5 H14.5 V11.5 L11.5,14.5 H0.5 V3 Z" fill="url(#chk)" stroke="#d01030" stroke-width="1"/></svg>
<div class="a" style="left:712px;top:530px;width:20px;height:20px;background:#fff"></div>
<svg style="left:712px;top:530px" width="20" height="20" viewBox="0 0 20 20"><path d="M2,4 Q3.5,3 5,4 T8,4 T11,4 T14,4 T17,4 M2,8.5 Q3.5,7.5 5,8.5 T8,8.5 T11,8.5 T14,8.5 T17,8.5 M2,13 Q3.5,12 5,13 T8,13 T11,13 T14,13 T17,13" fill="none" stroke="#e8341c" stroke-width="1.6"/><path d="M0,17.5 H20" stroke="#e8341c" stroke-width="1.3"/><path d="M0.5,3 L19,14" stroke="#10e030" stroke-width="1.3"/></svg>
<svg style="left:748px;top:530px" width="20" height="20" viewBox="0 0 20 20"><rect x="1" y="1" width="18" height="18" rx="2.5" fill="#fff" stroke="#e8341c" stroke-width="1.7"/><path d="M1.8,1.8 L18.8,18.8" stroke="#00e000" stroke-width="1.8"/></svg>
<div class="a" style="left:778px;top:530px;width:20px;height:20px;background:#fff"></div>
<svg style="left:778px;top:530px" width="20" height="20" viewBox="0 0 20 20"><rect x="1.5" y="1.5" width="17" height="17" rx="2" fill="none" stroke="#e85a48" stroke-width="1.3"/><path d="M1.5,6 H18.5 M1.5,10 H18.5 M1.5,14 H18.5 M7,1.5 V6 M13,1.5 V6 M4,6 V10 M10,6 V10 M16,6 V10 M7,10 V14 M13,10 V14 M10,14 V18.5" stroke="#e85a48" stroke-width="1" fill="none"/><path d="M2.5,3 L17.5,17 M17.5,3 L2.5,17" stroke="#000" stroke-width="1.2"/></svg>
<div class="a" style="left:806px;top:530px;width:18px;height:16px;background:#fff"></div>
<svg style="left:806px;top:530px" width="18" height="16" viewBox="0 0 18 16"><path d="M1.5,5.5 H6.5 V2 L12,7.5 L6.5,13 V9.5 H1.5 Z" fill="#10b0e8"/><path d="M11.5,0 V5.5 H17" fill="none" stroke="#d01050" stroke-width="1.2"/><path d="M11.5,15.5 V10 H17" fill="none" stroke="#d01050" stroke-width="1.2"/><path d="M12.5,4.5 L17,0.5 V4.5 Z M12.5,11 L17,15 V11 Z" fill="#70c820"/></svg>
<div class="a" style="left:832px;top:530px;width:19px;height:16px;background:#fff"></div>
<svg style="left:833px;top:530px" width="17" height="16" viewBox="0 0 17 16"><defs><clipPath id="cv"><rect x="0.5" y="0" width="16" height="16"/></clipPath></defs><g clip-path="url(#cv)"><path d="M-2,-1 L8.5,9.5 L19,-1 M-2,4 L8.5,14.5 L19,4 M-2,9 L5,16 M19,9 L12,16 M-2,-6 L8.5,4.5 L19,-6" fill="none" stroke="#70c820" stroke-width="2.2"/></g><path d="M8.5,0 V16" stroke="#d01050" stroke-width="1.2"/></svg>
<div class="a" style="left:860px;top:530px;width:20px;height:20px;background:#fff"></div>
<svg style="left:860px;top:530px" width="20" height="20" viewBox="0 0 20 20"><path d="M1,3.5 H19 M1,9.7 H19 M1,15.8 H19" stroke="#e8341c" stroke-width="1.3"/><circle cx="7" cy="3.5" r="2.4" fill="#fff" stroke="#e8341c" stroke-width="1.4"/><circle cx="13.2" cy="9.7" r="2.4" fill="#fff" stroke="#e8341c" stroke-width="1.4"/><circle cx="7" cy="15.8" r="2.4" fill="#fff" stroke="#e8341c" stroke-width="1.4"/></svg>
<div class="a" style="left:651px;top:555px;width:180px;height:209px;background:#fff;border-left:1px solid #a0a0a0;border-top:1px solid #a0a0a0"></div>
<div class="a" style="left:652px;top:556px;width:178px;height:18px;overflow:hidden"><div class="t" style="left:-3px;top:3px">仿真列表</div></div>
<div class="a" style="left:658px;top:578px;width:1px;height:52px;background:repeating-linear-gradient(to bottom,#a0a0a0 0 1px,transparent 1px 2px)"></div>
<svg style="left:654px;top:583px" width="9" height="9" viewBox="0 0 9 9"><rect x="0.5" y="0.5" width="8" height="8" fill="#fff" stroke="#a0a0a0"/><path d="M2,4.5 H7 M4.5,2 V7" stroke="#000"/></svg>
<svg style="left:668px;top:579px" width="13" height="14" viewBox="0 0 13 14"><path d="M0.5,0.5 H8 L12.5,5 V13.5 H0.5 Z M8,0.5 V5 H12.5" fill="#fff" stroke="#000" stroke-width="1"/></svg>
<div class="a" style="left:688px;top:579px;width:142px;height:18px;overflow:hidden"><div class="t l" style="left:0;top:1px;font-size:12.3px;color:#000">tut4_sicletch_ady_202508</div></div>
<svg style="left:654px;top:604px" width="9" height="9" viewBox="0 0 9 9"><rect x="0.5" y="0.5" width="8" height="8" fill="#fff" stroke="#a0a0a0"/><path d="M2,4.5 H7 M4.5,2 V7" stroke="#000"/></svg>
<svg style="left:668px;top:600px" width="13" height="14" viewBox="0 0 13 14"><path d="M0.5,0.5 H8 L12.5,5 V13.5 H0.5 Z M8,0.5 V5 H12.5" fill="#fff" stroke="#000" stroke-width="1"/></svg>
<div class="a" style="left:688px;top:600px;width:142px;height:18px;overflow:hidden"><div class="t l" style="left:0;top:1px;font-size:12.3px;color:#000">tut2_3D_dep_20250826</div></div>
<svg style="left:654px;top:625px" width="9" height="9" viewBox="0 0 9 9"><rect x="0.5" y="0.5" width="8" height="8" fill="#fff" stroke="#a0a0a0"/><path d="M2,4.5 H7 M4.5,2 V7" stroke="#000"/></svg>
<svg style="left:668px;top:621px" width="13" height="14" viewBox="0 0 13 14"><path d="M0.5,0.5 H8 L12.5,5 V13.5 H0.5 Z M8,0.5 V5 H12.5" fill="#fff" stroke="#000" stroke-width="1"/></svg>
<div class="a" style="left:686px;top:619px;width:144px;height:21px;background:#0078d7"></div>
<div class="a" style="left:688px;top:621px;width:142px;height:18px;overflow:hidden"><div class="t l" style="left:0;top:1px;font-size:12.3px;color:#fff">tut2_sicletch_ady_202508</div></div>
<div class="a" style="left:652px;top:748px;width:178px;height:15px;background:repeating-conic-gradient(#f0f0f0 0 25%,#fff 0 50%) 0 0/2px 2px"></div>
<div class="a" style="left:652px;top:748px;width:15px;height:15px;background:#f0f0f0;border-style:solid;border-width:1px;border-color:#f0f0f0 #696969 #696969 #f0f0f0"></div><div class="a" style="left:653px;top:749px;width:13px;height:13px;border-style:solid;border-width:1px;border-color:#fff #a0a0a0 #a0a0a0 #fff"></div>
<svg style="left:657px;top:752px" width="5" height="8" viewBox="0 0 5 8"><path d="M4,0 V7 L0.5,3.5 Z" fill="#000"/></svg>
<div class="a" style="left:815px;top:748px;width:15px;height:15px;background:#f0f0f0;border-style:solid;border-width:1px;border-color:#f0f0f0 #696969 #696969 #f0f0f0"></div><div class="a" style="left:816px;top:749px;width:13px;height:13px;border-style:solid;border-width:1px;border-color:#fff #a0a0a0 #a0a0a0 #fff"></div>
<svg style="left:821px;top:752px" width="5" height="8" viewBox="0 0 5 8"><path d="M0,0 V7 L3.5,3.5 Z" fill="#000"/></svg>
<div class="a" style="left:671px;top:748px;width:131px;height:15px;background:#f0f0f0;border-style:solid;border-width:1px;border-color:#f0f0f0 #696969 #696969 #f0f0f0"></div><div class="a" style="left:672px;top:749px;width:129px;height:13px;border-style:solid;border-width:1px;border-color:#fff #a0a0a0 #a0a0a0 #fff"></div>
<div class="a" style="left:835px;top:555px;width:398px;height:209px;background:#fff;border-left:1px solid #a0a0a0;border-top:1px solid #a0a0a0"></div>
<div class="a" style="left:837px;top:557px;width:21px;height:22px;background:#f0f0f0;border-right:1px solid #a0a0a0;border-bottom:1px solid #a0a0a0;box-shadow:inset 1px 1px 0 #fff"></div>
<div class="a" style="left:858px;top:557px;width:96px;height:22px;background:#f0f0f0;border-right:1px solid #a0a0a0;border-bottom:1px solid #a0a0a0;box-shadow:inset 1px 1px 0 #fff"></div>
<div class="t" style="left:861px;top:560px">名字</div>
<div class="a" style="left:954px;top:557px;width:96px;height:22px;background:#f0f0f0;border-right:1px solid #a0a0a0;border-bottom:1px solid #a0a0a0;box-shadow:inset 1px 1px 0 #fff"></div>
<div class="t" style="left:957px;top:560px">区域总数</div>
<div class="a" style="left:1050px;top:557px;width:96px;height:22px;background:#f0f0f0;border-right:1px solid #a0a0a0;border-bottom:1px solid #a0a0a0;box-shadow:inset 1px 1px 0 #fff"></div>
<div class="t" style="left:1053px;top:560px">体积总数</div>
<div class="a" style="left:1146px;top:557px;width:87px;height:22px;background:#f0f0f0;border-right:1px solid #a0a0a0;border-bottom:1px solid #a0a0a0;box-shadow:inset 1px 1px 0 #fff"></div>
<div class="t" style="left:1149px;top:560px">边界总数</div>
<div class="t" style="left:872px;top:582px">体积条件</div>
<div class="t" style="left:872px;top:603px">边界条件</div>
<div class="t" style="left:872px;top:624px">初始条件</div>
<div class="t" style="left:872px;top:645px">可视化对象</div>
<div class="t l" style="left:968px;top:582px;font-size:12.5px">3</div>
<div class="t l" style="left:1064px;top:582px;font-size:12.5px">3</div>
<div class="t l" style="left:1161px;top:582px;font-size:12.5px">12</div>
<svg style="left:838px;top:579px" width="20" height="20" viewBox="0 0 20 20"><path d="M10,1 L18.5,5.5 V14.5 L10,19 L1.5,14.5 V5.5 Z M1.5,5.5 L10,10 L18.5,5.5 M10,10 V19" fill="none" stroke="#e8341c" stroke-width="1.3"/><path d="M10,2 V9.5 M4,13.5 L10,10 L16,13.5" stroke="#e8341c" stroke-width="0.7" stroke-dasharray="1.5 1" fill="none"/></svg>
<svg style="left:838px;top:600px" width="20" height="20" viewBox="0 0 20 20"><rect x="1" y="1" width="18" height="18" rx="2.5" fill="none" stroke="#e8341c" stroke-width="1.6"/><path d="M1.5,1.5 L19,19" stroke="#00e000" stroke-width="1.8"/></svg>
<svg style="left:838px;top:621px" width="20" height="20" viewBox="0 0 20 20"><rect x="1" y="1" width="18" height="18" rx="2" fill="none" stroke="#f07060" stroke-width="1.3"/><path d="M5.5,6 V14 M7.5,6 V14" stroke="#80f080" stroke-width="1" fill="none"/><path d="M9.5,5.5 V14.5 L15,10 Z" fill="none" stroke="#80f080" stroke-width="1"/></svg>
<svg style="left:837px;top:645px" width="20" height="13" viewBox="0 0 20 13"><ellipse cx="5" cy="6.5" rx="4" ry="5.5" fill="#30c030"/><ellipse cx="8.5" cy="6.5" rx="4" ry="5.5" fill="#30d0e0"/><ellipse cx="12" cy="6" rx="4" ry="5" fill="#f0e020"/><ellipse cx="15" cy="6" rx="3.5" ry="4.5" fill="#e020e0"/></svg>
<div class="a" style="left:836px;top:748px;width:396px;height:15px;background:repeating-conic-gradient(#f0f0f0 0 25%,#fff 0 50%) 0 0/2px 2px"></div>
<div class="a" style="left:836px;top:748px;width:15px;height:15px;background:#f0f0f0;border-style:solid;border-width:1px;border-color:#f0f0f0 #696969 #696969 #f0f0f0"></div><div class="a" style="left:837px;top:749px;width:13px;height:13px;border-style:solid;border-width:1px;border-color:#fff #a0a0a0 #a0a0a0 #fff"></div>
<svg style="left:841px;top:752px" width="5" height="8" viewBox="0 0 5 8"><path d="M4,0 V7 L0.5,3.5 Z" fill="#000"/></svg>
<div class="a" style="left:1217px;top:748px;width:15px;height:15px;background:#f0f0f0;border-style:solid;border-width:1px;border-color:#f0f0f0 #696969 #696969 #f0f0f0"></div><div class="a" style="left:1218px;top:749px;width:13px;height:13px;border-style:solid;border-width:1px;border-color:#fff #a0a0a0 #a0a0a0 #fff"></div>
<svg style="left:1223px;top:752px" width="5" height="8" viewBox="0 0 5 8"><path d="M0,0 V7 L3.5,3.5 Z" fill="#000"/></svg>
<div class="a" style="left:851px;top:748px;width:356px;height:15px;background:#f0f0f0;border-style:solid;border-width:1px;border-color:#f0f0f0 #696969 #696969 #f0f0f0"></div><div class="a" style="left:852px;top:749px;width:354px;height:13px;border-style:solid;border-width:1px;border-color:#fff #a0a0a0 #a0a0a0 #fff"></div>

<!-- status bar -->
<div class="t" style="left:7px;top:773px">准备。</div>
<div class="hl" style="left:0;top:791px;width:1278px;background:#646464"></div>
<svg style="left:1220px;top:774px" width="18" height="17" viewBox="0 0 18 17">
 <path d="M17 4 L4 17 M17 10 L10 17 M17 15 L15 17" stroke="#a0a0a0" stroke-width="1"/>
 <path d="M17 5 L5 17 M17 11 L11 17" stroke="#fff" stroke-width="1"/>
</svg>

</body></html>
